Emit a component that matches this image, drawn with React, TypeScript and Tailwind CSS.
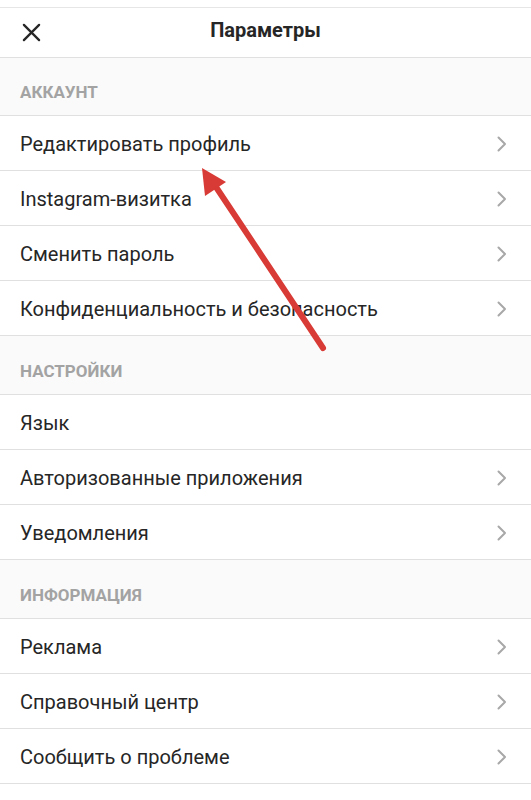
import React from "react";

const Chevron = () => (
  <svg width="12" height="18" viewBox="0 0 12 18" className="shrink-0">
    <path d="M2.5 2.5 L9 9 L2.5 15.5" fill="none" stroke="#a8a8a8" strokeWidth="2" strokeLinecap="round" strokeLinejoin="round" />
  </svg>
);

const Row = ({ label, chevron = true }: { label: string; chevron?: boolean }) => (
  <div className="h-[55px] flex items-center justify-between pl-5 pr-[23px] pt-[2px] border-b border-[#e0e0e0] bg-white">
    <span className="text-[20px] text-[#262626] leading-none">{label}</span>
    {chevron && <Chevron />}
  </div>
);

const Section = ({ label, tall = false }: { label: string; tall?: boolean }) => (
  <div
    className={
      tall
        ? "h-[59px] flex items-center pt-[13px] pl-5 border-b border-[#e0e0e0] bg-[#fafafa]"
        : "h-[58px] flex items-center pt-[12px] pl-5 border-b border-[#e0e0e0] bg-[#fafafa]"
    }
  >
    <span className="text-[17px] font-bold text-[#a3a3a3] leading-none">{label}</span>
  </div>
);

export default function App() {
  return (
    <div className="relative w-[531px] h-[800px] overflow-hidden bg-white" style={{ fontFamily: "Roboto, 'Noto Sans', sans-serif" }}>
      <div className="h-[8px] border-b border-[#e6e6e6] bg-white" />
      <div className="h-[50px] relative flex items-center justify-center pb-[5px] border-b border-[#e0e0e0] bg-white">
        <svg width="19" height="19" viewBox="0 0 20 20" className="absolute left-[22px] top-[15px]">
          <path d="M2 2 L18 18 M18 2 L2 18" stroke="#262626" strokeWidth="2.4" strokeLinecap="round" />
        </svg>
        <span className="text-[20px] font-bold text-[#262626] leading-none">Параметры</span>
      </div>
      <Section label="АККАУНТ" />
      <Row label="Редактировать профиль" />
      <Row label="Instagram-визитка" />
      <Row label="Сменить пароль" />
      <Row label="Конфиденциальность и безопасность" />
      <Section label="НАСТРОЙКИ" tall />
      <Row label="Язык" chevron={false} />
      <Row label="Авторизованные приложения" />
      <Row label="Уведомления" />
      <Section label="ИНФОРМАЦИЯ" tall />
      <Row label="Реклама" />
      <Row label="Справочный центр" />
      <Row label="Сообщить о проблеме" />
      <Row label="" chevron={false} />
      <svg className="absolute left-0 top-0 pointer-events-none" width="531" height="800" viewBox="0 0 531 800">
        <line x1="323" y1="348" x2="214" y2="184" stroke="#d83a35" strokeWidth="6" strokeLinecap="round" />
        <polygon points="202,168 205,196 226,182" fill="#d83a35" />
      </svg>
    </div>
  );
}
